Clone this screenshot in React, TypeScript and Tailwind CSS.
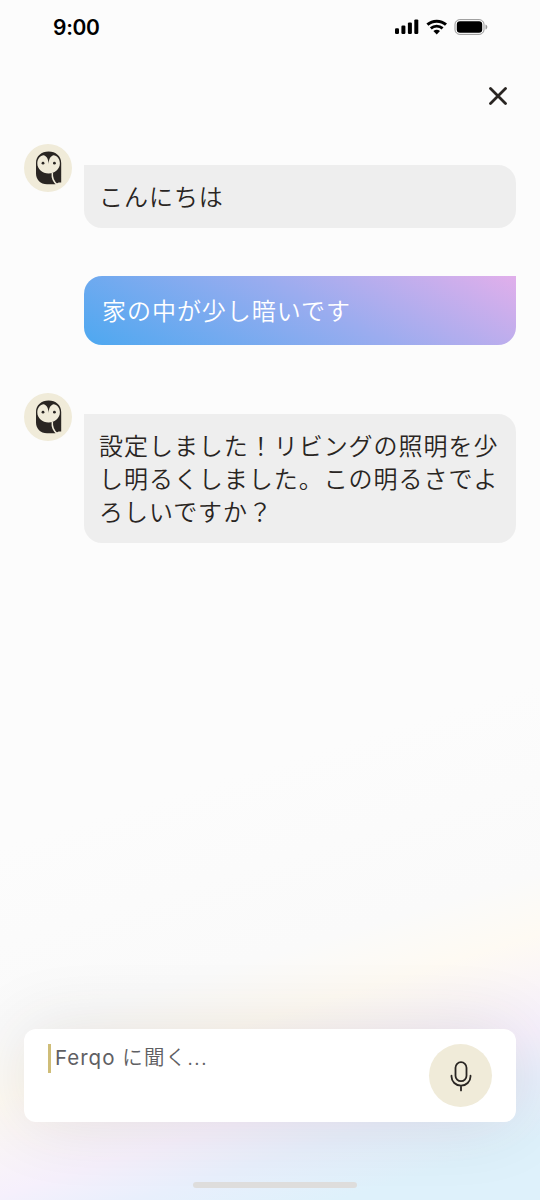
import type { ReactNode } from 'react'

const GREETING = 'こんにちは'
const REQUEST = '家の中が少し暗いです'
const REPLY = '設定しました！リビングの照明を少し明るくしました。この明るさでよろしいですか？'

function StatusBar() {
  return (
    <div className="flex h-[54px] items-center justify-between pl-[53px] pr-[52px] pt-px">
      <span className="font-['Inter',sans-serif] text-[21px] font-semibold leading-none tracking-[-0.3px] text-black">9:00</span>
      <div className="flex items-center pb-[2px]">
        <svg width="24" height="16" viewBox="0 0 24 16" className="mr-[7px]">
          <rect x="0" y="9.3" width="4" height="5.7" rx="1.2" />
          <rect x="6.4" y="6.6" width="4" height="8.4" rx="1.2" />
          <rect x="12.9" y="3.4" width="4" height="11.6" rx="1.2" />
          <rect x="19.3" y="0.4" width="4" height="14.6" rx="1.2" />
        </svg>
        <svg width="22" height="16" viewBox="0 0 22 16" className="mr-[6px]">
          <path d="M1.4 5.7a13.9 13.9 0 0 1 18.6 0" fill="none" stroke="#000" strokeWidth="3" />
          <path d="M4.8 9.4a8.8 8.8 0 0 1 11.8 0" fill="none" stroke="#000" strokeWidth="2.8" />
          <path d="M7.4 12.1a5 5 0 0 1 6.6 0l-3.3 3.3z" />
        </svg>
        <svg width="34" height="16" viewBox="0 0 34 16">
          <rect x="1" y="0.6" width="29" height="14.8" rx="4.8" fill="none" stroke="#000" strokeOpacity="0.4" />
          <rect x="2.8" y="2.3" width="25.4" height="11.4" rx="3.2" />
          <path d="M31.5 5.4c1.2.5 1.8 1.4 1.8 2.6s-.6 2.1-1.8 2.6z" fillOpacity="0.4" />
        </svg>
      </div>
    </div>
  )
}

function OwlAvatar() {
  return (
    <svg width="48" height="48" viewBox="0 0 48 48" className="mr-3 shrink-0">
      <circle cx="24" cy="24" r="24" fill="#f0ebd9" />
      {/* body */}
      <path
        d="M12 19C12 12 17.5 7.500 24.600 7.500S37.200 12 37.200 19v19.500h-2.500L31.200 40.300H23C16.500 40.300 12 35.500 12 29.500z"
        fill="#292522"
      />
      {/* face */}
      <path
        d="M24.600 20C24.400 15.500 23 12.300 19.800 11.200 16 11.600 13.300 15 13.300 19.200c0 5.900 5 10.300 11.300 10.300s11.300-4.400 11.300-10.300c0-4.200-2.700-7.600-6.500-8-3.200 1.100-4.600 4.300-4.800 8.800z"
        fill="#f0ebd9"
      />
      <circle cx="19" cy="19.200" r="1.400" fill="#292522" />
      <circle cx="30.400" cy="19.200" r="1.400" fill="#292522" />
      {/* wing */}
      <path d="M28.300 29c-.4 4.800 1 8.500 4.700 11.500" fill="none" stroke="#f0ebd9" strokeWidth="1.500" />
    </svg>
  )
}

function BotMessage({ children }: { children: ReactNode }) {
  return (
    <div className="flex items-start">
      <OwlAvatar />
      <p className="mt-[21px] flex-1 rounded-[18px] rounded-tl-none bg-[#eeeeee] pb-4 pl-[15px] pr-2 pt-[14px] text-[24px] font-[350] leading-[33px] tracking-[0.96px] text-[#292522]">
        {children}
      </p>
    </div>
  )
}

function UserMessage({ children }: { children: ReactNode }) {
  return (
    <p className="ml-[60px] rounded-[18px] rounded-tr-none bg-[linear-gradient(28deg,#4da8f0,#9bacef_55%,#e1afeb)] pb-[19px] pl-[18px] pt-[17px] text-[24px] font-[350] leading-[33px] tracking-[0.96px] text-white">
      {children}
    </p>
  )
}

function Composer() {
  return (
    <div className="mx-6 flex h-[93px] items-start justify-between rounded-xl bg-white pl-6 pr-6 pt-[15px] shadow-[0_0_72px_rgba(60,50,40,0.12)]">
      <div className="flex items-start">
        <span className="h-[29px] w-[2.5px] bg-[#cfbd78]" />
        <span className="ml-[4.5px] font-['Inter','Noto_Sans_CJK_JP',sans-serif] text-[20.5px] font-[350] leading-[28px] tracking-[1.1px] text-[#5f6063]">
          <span className="font-normal tracking-[1px]">Ferqo</span> に聞く...
        </span>
      </div>
      <button className="flex size-[63px] items-center justify-center rounded-full bg-[#f0ebd9]" aria-label="音声入力">
        <svg width="24" height="32" viewBox="0 0 24 32" fill="none" stroke="#292522" strokeWidth="1.8" strokeLinecap="round">
          <rect x="6.500" y="2.200" width="11" height="19" rx="5.500" />
          <path d="M2.500 15.700v.8a9.500 9.200 0 0 0 19 0v-.8M12 25.700v4.700" />
        </svg>
      </button>
    </div>
  )
}

export default function App() {
  return (
    <div
      lang="ja"
      className="flex h-[1200px] w-[540px] flex-col overflow-hidden bg-[linear-gradient(163deg,#fcfcfc_62%,#fafafa_76%,#fefaf3_80.500%,#f6f0fc_87.500%,#e8effc_91%,#def1fb_95.500%,#def1fb_100%)] font-['Noto_Sans_CJK_JP',sans-serif]"
    >
      <StatusBar />
      <div className="flex h-[90px] items-center justify-end px-[33px] pb-[6px]">
        <button aria-label="閉じる">
          <svg width="18" height="18" viewBox="0 0 18 18" fill="none" stroke="#292522" strokeWidth="2.800" strokeLinecap="round">
            <path d="M1.500 1.500l15 15M16.500 1.500l-15 15" />
          </svg>
        </button>
      </div>
      <main className="flex flex-1 flex-col gap-12 px-6">
        <BotMessage>{GREETING}</BotMessage>
        <UserMessage>{REQUEST}</UserMessage>
        <BotMessage>{REPLY}</BotMessage>
      </main>
      <Composer />
      <div className="mx-auto mb-3 mt-[60px] h-[6px] w-[164px] translate-x-[5px] rounded-full bg-[#dedddc]" />
    </div>
  )
}
